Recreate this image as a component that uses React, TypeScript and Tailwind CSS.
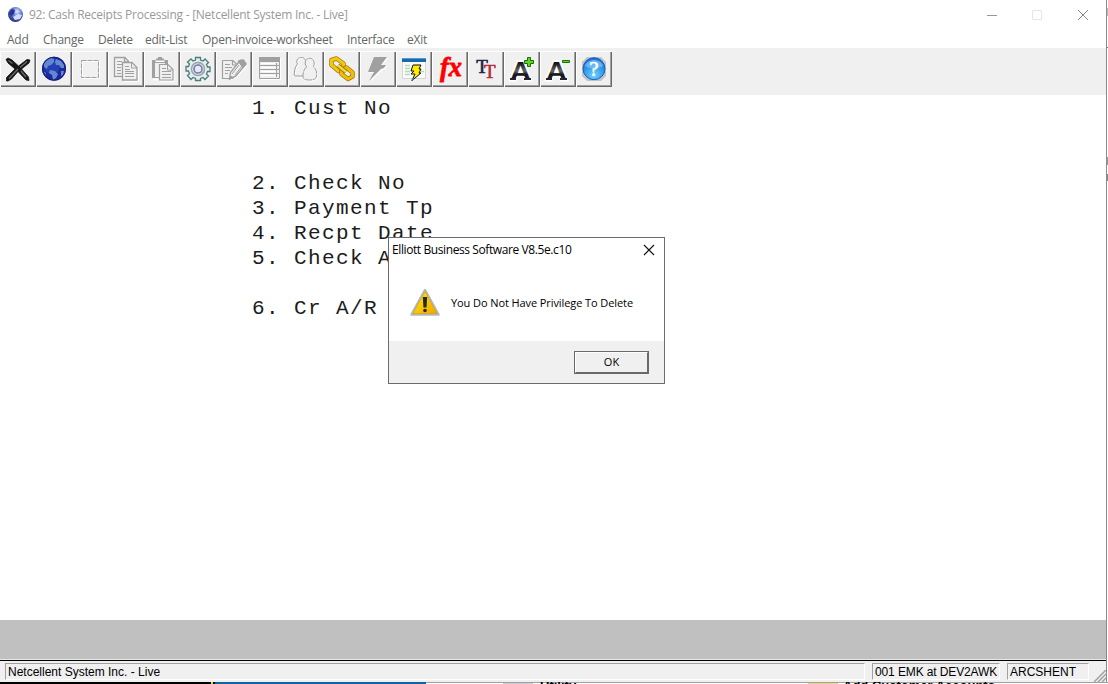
import type { ReactNode } from "react";
import { clsx } from "clsx";

const MENU_ITEMS = [
  { label: "Add", className: "w-9" },
  { label: "Change", className: "w-[55px]" },
  { label: "Delete", className: "w-[47px]" },
  { label: "edit-List", className: "w-[57px]" },
  { label: "Open-invoice-worksheet", className: "w-[145px]" },
  { label: "Interface", className: "w-[60px]" },
  { label: "eXit", className: "w-8" },
];

// blank entries keep the terminal's 25px line grid
const SCREEN_LINES = [
  "1. Cust No",
  "",
  "",
  "2. Check No",
  "3. Payment Tp",
  "4. Recpt Date",
  "5. Check A",
  "",
  "6. Cr A/R",
];

function Icon({ children }: { children: ReactNode }) {
  return (
    <svg width="36" height="36" viewBox="0 0 36 36" fill="none" className="block">
      {children}
    </svg>
  );
}

function CrossIcon() {
  return (
    <Icon>
      <path
        d="M6 8.500L8 7l4 2 6.500 6L27 8.500l3 .5-1 3-7.500 6 7 8 .5 3.500-3-.5-8-8.500-6.500 7.500-3.500 2H6.500v-3.500l8.500-8.500-7-6z"
        fill="#151515"
        stroke="#151515"
        strokeWidth=".8"
      />
      <path d="M8.500 9.500l4 3M9 27.500l9-9.500M20 16.500l7-6M21 20l5 6" stroke="#6a6a6a" strokeWidth="1.300" />
    </Icon>
  );
}

function GlobeIcon() {
  return (
    <Icon>
      <circle cx="18" cy="17.700" r="12" fill="#1c2a9c" />
      <circle cx="16" cy="15" r="8" fill="#2440b4" />
      <path
        d="M8 12l3-3 4-2 3 1v3l-3 3-3 1-1 3-3-2zM20 8l5 2 3 4 0 3-3 0-2-3-3 0-1-3zM14 19l5 1 3 3-2 4-3 2-1-5-3-2zM25 20l3 0-1 4-2 1zM7 20l3 2 0 2z"
        fill="#6488cf"
      />
      <circle cx="18" cy="17.700" r="11.500" stroke="#141c7c" />
    </Icon>
  );
}

function SelectIcon() {
  return (
    <Icon>
      <path d="M10.500 10.500H27.500V27.500H10.500Z" stroke="#fff" />
      <path d="M9.500 9.500H26.500V26.500H9.500Z" stroke="#a0a0a0" strokeDasharray="5 1" />
    </Icon>
  );
}

function CopyIcon() {
  return (
    <Icon>
      <path d="M7.500 26.500h8M16 7h3l4 4" stroke="#fff" strokeWidth="1.500" />
      <path d="M14 25.500H6.500V6.500H17l3.500 3.500v2M16.500 7v4h4" stroke="#a0a0a0" strokeWidth="1.300" />
      <path d="M9 10.500h5M9 13.500h5M9 16.500h4M9 19.500h4M9 22.500h4" stroke="#a0a0a0" />
      <path d="M15.500 11.500H25l4.500 5v13h-14z" stroke="#fff" transform="translate(1 1)" />
      <path d="M14.500 11.500H24l5 5v12.500H14.500z" fill="#f0f0f0" stroke="#a0a0a0" strokeWidth="1.300" />
      <path d="M23.500 12v5H29M17 15.500h4M17 18.500h5M17 20.500h9M17 22.500h9M17 25.500h9" stroke="#a0a0a0" />
    </Icon>
  );
}

function PasteIcon() {
  return (
    <Icon>
      <path d="M9 28.500h7M24.500 12v-1" stroke="#fff" strokeWidth="1.500" />
      <path d="M8 9h16v4h-3v-1H11v14h4v1H8z" fill="#a0a0a0" />
      <path d="M12 9V7.500h2V6h4v1.500h2V9z" fill="#a0a0a0" />
      <path d="M11.500 9.500h9v1.500h-9z" fill="#fff" />
      <path d="M15.500 14.500H24l5 4v11.500H15.500z" stroke="#fff" transform="translate(1 .7)" />
      <path d="M15.500 13.500H24l5 5v10.500H15.500z" fill="#f0f0f0" stroke="#a0a0a0" strokeWidth="1.200" />
      <path d="M23.500 14v5H29M18 17.500h4M18 20.500h9M18 23.500h9M18 26.500h9" stroke="#a0a0a0" />
    </Icon>
  );
}

function GearIcon() {
  return (
    <Icon>
      <path
        d="M15.500 9V6.500h5V9l2.500 1 2-2 3.500 3.500-2 2 1 2.500h2.500v4.500h-2.500l-1 2.500 2 2-3.500 3.500-2-2-2.500 1v2h-5v-2l-2.500-1-2 2L7.500 24.500l2-2-1-2.500H6v-4.500h2.500l1-2.500-2-2L11 8l2 2z"
        fill="#e3efe8"
        stroke="#4d7c7d"
        strokeWidth="1.300"
      />
      <path d="M18 10.500l4 1-4 3zM20 22l5-4v4z" fill="#b8dcc3" />
      <circle cx="18" cy="18" r="6.500" stroke="#9aa0bd" strokeWidth="1.500" />
      <circle cx="18" cy="18" r="4" fill="#e9e8f4" stroke="#777ba4" strokeWidth="1.600" />
    </Icon>
  );
}

function EditIcon() {
  return (
    <Icon>
      <path d="M6.500 9.500H17l4 4M6.500 9.500v18H17M16.500 10v4h4" stroke="#a0a0a0" strokeWidth="1.200" />
      <path d="M9 13.500h5M9 16.500h7M9 19.500h5M9 22.500h3" stroke="#a0a0a0" />
      <path d="M14 29.500l1-6L25 11l3 0 3 4-10 12z" fill="#fff" />
      <path d="M13.500 28l1-6.500L24 9.500h3l3 3.500-10 12z" fill="#f0f0f0" stroke="#a0a0a0" strokeWidth="1.400" />
      <path d="M22 10l3-1h3l2 4-3 4zM13.500 28l1-3 3 2zM16 23l7-9M19 24l7-9" fill="#a0a0a0" stroke="#a0a0a0" />
    </Icon>
  );
}

function ListIcon() {
  return (
    <Icon>
      <path d="M8.500 28.500H28.500V7" stroke="#fff" />
      <path d="M7.500 6.500h20v21h-20z" stroke="#a0a0a0" />
      <path d="M7 6h21v5H7z" fill="#a0a0a0" />
      <path d="M8 14.500h19M8 18.500h19M8 22.500h19M24.500 12v14" stroke="#a0a0a0" />
      <path d="M9 12.500h14M9 16.500h14M9 20.500h14M9 24.500h14" stroke="#fff" />
    </Icon>
  );
}

function PeopleIcon() {
  const back = "M9.500 13c-2-3 0-6 3-6.500 3.500-.5 6 2 5 6.500l2 3 1 9H8c-2 0-2-1-1.500-4 .3-3 .5-5 3-8z";
  const front = "M18.500 16c-2-3-2-7.500 2-8.500 4-1 7 2 5 8.500 3 2 3.500 6 3 9 0 3-3 4-7.500 4s-6-1.500-6-4c0-4 1-7 3.500-9z";
  return (
    <Icon>
      <path d={back} stroke="#fff" transform="translate(1 1)" />
      <path d={back} stroke="#a0a0a0" />
      <path d={front} stroke="#fff" transform="translate(1 1)" />
      <path d={front} fill="#f0f0f0" stroke="#a0a0a0" strokeDasharray="7 .8" />
    </Icon>
  );
}

function ChainIcon() {
  return (
    <Icon>
      <g strokeLinejoin="round">
        <path d="M7.500 9l5-1.500 7 5v5l-5 2.500-7-6z" stroke="#9c7a04" strokeWidth="4.500" />
        <path d="M7.500 9l5-1.500 7 5v5l-5 2.500-7-6z" stroke="#f3c710" strokeWidth="3" />
        <path d="M17.500 19l5-2.500 6 5v4l-4.500 2.500-6.500-5z" stroke="#9c7a04" strokeWidth="4.500" />
        <path d="M17.500 19l5-2.500 6 5v4l-4.500 2.500-6.500-5z" stroke="#efbd08" strokeWidth="3" />
        <path d="M14 14.500l8 6.500" stroke="#9c7a04" strokeWidth="4.500" />
        <path d="M14 14.500l8 6.500" stroke="#f8d838" strokeWidth="2.500" />
      </g>
    </Icon>
  );
}

function BoltIcon() {
  const bolt = "M14 6h13l-6 8h5l-2 3-3 1-12 12 5-9H8z";
  return (
    <Icon>
      <path d={bolt} fill="#fff" transform="translate(1 1)" />
      <path d={bolt} fill="#a0a0a0" />
    </Icon>
  );
}

function WindowBoltIcon() {
  return (
    <Icon>
      <path d="M6.500 7.500h23v20h-23z" fill="#fafafa" stroke="#d5d5d5" />
      <path d="M6 7h24v4H6z" fill="#1769ad" />
      <path d="M6 7.500h24" stroke="#4e9bd0" />
      <path d="M9 14.500h5M9 17.500h5M9 20.500h5M9 23.500h5M25 20.500h3" stroke="#b4d9b5" strokeWidth="1.500" />
      <path d="M17 14h8l-2 4h2l-2 4h2l-9 7.500 3-6.500h-4l3-3h-3z" fill="#ffed00" stroke="#111" />
      <path d="M15 29.500l3-2" stroke="#00aeb9" />
    </Icon>
  );
}

function FunctionIcon() {
  return (
    <Icon>
      <text
        x="8"
        y="25"
        fontFamily="Liberation Serif, serif"
        fontSize="27"
        fontWeight="700"
        fontStyle="italic"
        fill="#f00"
        stroke="#f00"
        strokeWidth=".8"
        textLength="22"
        lengthAdjust="spacingAndGlyphs"
      >
        fx
      </text>
    </Icon>
  );
}

function FontIcon() {
  return (
    <Icon>
      <text x="8.300" y="21.500" fontFamily="Liberation Serif, serif" fontSize="19" fill="#202040" stroke="#202040" strokeWidth=".6">
        T
      </text>
      <text x="16" y="27" fontFamily="Liberation Serif, serif" fontSize="19" fill="#b52b35" stroke="#b52b35" strokeWidth=".6">
        T
      </text>
    </Icon>
  );
}

function LetterA() {
  return (
    <>
      <defs>
        <linearGradient id="letter-a" x1="0" y1="0" x2="0" y2="1">
          <stop offset=".2" stopColor="#111" />
          <stop offset=".5" stopColor="#666" />
          <stop offset=".62" stopColor="#181820" />
          <stop offset="1" stopColor="#222230" />
        </linearGradient>
      </defs>
      <text
        x="6"
        y="29"
        fontFamily="Liberation Sans, sans-serif"
        fontSize="25"
        fontWeight="700"
        stroke="#fff"
        strokeWidth="3"
        fill="url(#letter-a)"
        paintOrder="stroke"
        textLength="21"
        lengthAdjust="spacingAndGlyphs"
      >
        A
      </text>
      <path d="M6 28h6M20 28h7" stroke="#222230" strokeWidth="2" />
    </>
  );
}

function EnlargeIcon() {
  return (
    <Icon>
      <LetterA />
      <path d="M23.500 6.500h3v3h3v3h-3v3h-3v-3h-3v-3h3z" fill="#62d321" stroke="#17700b" />
    </Icon>
  );
}

function ReduceIcon() {
  return (
    <Icon>
      <LetterA />
      <path d="M22.500 9.500h7v2h-7z" fill="#62d321" stroke="#17700b" />
    </Icon>
  );
}

function HelpIcon() {
  return (
    <Icon>
      <defs>
        <radialGradient id="help-ball" cx=".5" cy=".8" r=".7">
          <stop offset="0" stopColor="#6bd5ff" />
          <stop offset="1" stopColor="#1676dc" />
        </radialGradient>
      </defs>
      <path d="M11 6h14l5 5v14l-5 5H11l-5-5V11z" fill="#c3c3c3" />
      <circle cx="18" cy="17.700" r="11" fill="url(#help-ball)" stroke="#1763bb" />
      <path d="M9 15c2-8 16-8 18 0-5 3-12 3-18 0z" fill="#8cc9f5" opacity=".65" />
      <text x="18" y="24.500" textAnchor="middle" fontFamily="Liberation Serif, serif" fontSize="21" fill="#fff" stroke="#fff" strokeWidth=".5">
        ?
      </text>
    </Icon>
  );
}

const TOOLS = [
  { name: "Exit", icon: CrossIcon },
  { name: "Web", icon: GlobeIcon },
  { name: "Select", icon: SelectIcon },
  { name: "Copy", icon: CopyIcon },
  { name: "Paste", icon: PasteIcon },
  { name: "Settings", icon: GearIcon },
  { name: "Edit", icon: EditIcon },
  { name: "List", icon: ListIcon },
  { name: "Users", icon: PeopleIcon },
  { name: "Link", icon: ChainIcon },
  { name: "Run", icon: BoltIcon },
  { name: "Macro", icon: WindowBoltIcon },
  { name: "Function", icon: FunctionIcon },
  { name: "Font", icon: FontIcon },
  { name: "Larger", icon: EnlargeIcon },
  { name: "Smaller", icon: ReduceIcon },
  { name: "Help", icon: HelpIcon },
];

function TitleBar() {
  return (
    <div className="flex h-[30px] items-center pl-[7px]">
      <svg width="17" height="17" viewBox="0 0 17 17">
        <defs>
          <radialGradient id="app-ball" cx=".6" cy=".3" r=".8">
            <stop offset="0" stopColor="#e6edff" />
            <stop offset=".35" stopColor="#7188d4" />
            <stop offset="1" stopColor="#101b79" />
          </radialGradient>
        </defs>
        <circle cx="8.500" cy="7.500" r="7.500" fill="url(#app-ball)" />
        <path d="M2 6l3-4 3 1-1 4-3 2z" fill="#26359a" />
        <path d="M6 10l5-3 4 1-2 4-5 1z" fill="#d5def7" />
      </svg>
      <span className="ml-[5px] text-[12px] tracking-[-0.247px] text-[#999]">
        92: Cash Receipts Processing - [Netcellent System Inc. - Live]
      </span>
      <svg width="104" height="12" viewBox="0 0 104 12" fill="none" className="mr-[16px] mb-px ml-auto">
        <path d="M1 6.500h10" stroke="#999" />
        <path d="M46.500 1.500h9v9h-9z" stroke="#e6e6e6" />
        <path d="M92 1l10 10M102 1L92 11" stroke="#8a8a8a" />
      </svg>
    </div>
  );
}

function MessageBox() {
  return (
    <div className="absolute top-[237px] left-[388px] flex h-[147px] w-[277px] flex-col border border-[#6b6b6b] bg-white">
      <div className="flex h-6 items-center justify-between pr-[9px] pl-[3px]">
        <span className="text-[12px] tracking-[-0.400px] text-black">Elliott Business Software V8.5e.c10</span>
        <svg width="12" height="12" viewBox="0 0 12 12">
          <path d="M1 1l10 10M11 1L1 11" stroke="#111" strokeWidth="1.100" />
        </svg>
      </div>
      <div className="flex flex-1 items-center pt-[3px] pl-[20px]">
        <svg width="32" height="32" viewBox="0 0 32 32">
          <defs>
            <linearGradient id="warning" x1="0" y1="0" x2="1" y2="1">
              <stop offset="0" stopColor="#fff000" />
              <stop offset="1" stopColor="#f2a500" />
            </linearGradient>
          </defs>
          <path d="M16 3L2.500 27.500h27z" fill="#bfc2c8" stroke="#b5b7bb" strokeWidth="2.500" strokeLinejoin="round" />
          <path d="M16 4.500L4 26.500h24z" fill="url(#warning)" stroke="#d49b00" strokeWidth=".6" />
          <path d="M13.800 10h4.400l-.7 10.500h-3z" fill="#25282b" />
          <circle cx="16" cy="23.500" r="1.800" fill="#25282b" />
        </svg>
        <span className="ml-[10px] text-[11px] tracking-[-0.090px] text-black">You Do Not Have Privilege To Delete</span>
      </div>
      <div className="flex h-[42px] justify-end bg-[#f0f0f0] pt-[10px] pr-[15px]">
        <button type="button" className="h-[23px] w-[75px] border border-[#696969]">
          <span className="flex h-full items-center justify-center border border-t-white border-r-[#696969] border-b-[#696969] border-l-white text-[11px] text-black">
            OK
          </span>
        </button>
      </div>
    </div>
  );
}

function StatusPane({ className, children }: { className: string; children: string }) {
  return (
    <div
      className={clsx(
        "flex h-[17px] items-center border border-t-[#a0a0a0] border-r-white border-b-white border-l-[#a0a0a0] pl-[2px] font-['Liberation_Sans',Arial,sans-serif] text-[12px] whitespace-nowrap text-black",
        className,
      )}
    >
      {children}
    </div>
  );
}

function StatusBar() {
  return (
    <div className="flex h-[21px] bg-[#f0f0f0] pt-[2px] pl-[5px]">
      <StatusPane className="w-[860px]">Netcellent System Inc. - Live</StatusPane>
      <StatusPane className="ml-[7px] w-[128px] tracking-[-0.120px]">001 EMK at DEV2AWK</StatusPane>
      <StatusPane className="ml-[7px] w-[82px]">ARCSHENT</StatusPane>
      <svg width="12" height="12" viewBox="0 0 12 12" className="mt-[7px] ml-auto">
        <path d="M0 12L12 0M4 12l8-8M8 12l4-4" stroke="#a0a0a0" strokeWidth="1.500" />
      </svg>
    </div>
  );
}

// the two pixel rows of other windows that show under this one
function BackgroundSliver() {
  return (
    <div className="flex h-[2px] overflow-hidden bg-white font-['Liberation_Sans',Arial,sans-serif] text-[13px] leading-[6px] font-bold whitespace-nowrap text-black">
      <div className="w-[211px] bg-black" />
      <div className="w-[2px] bg-[#e6e600]" />
      <div className="w-[2px] bg-black" />
      <div className="w-[211px] bg-[#1562a3]" />
      <div className="flex h-[2px] flex-1 border-t border-[#a0a0a0]">
        <div className="ml-[77px] w-[30px] bg-[#c9ccd3]" />
        <span className="ml-[7px] w-10">Utility</span>
        <div className="ml-[228px] w-[30px] bg-[#efd47c]" />
        <span className="ml-[5px]">Add Customer Accounts</span>
      </div>
    </div>
  );
}

export default function App() {
  return (
    <div className="relative h-[684px] w-[1108px] overflow-hidden bg-white font-['Open_Sans','Noto_Sans',sans-serif]">
      <div className="flex">
        <div className="h-[682px] w-[1106px]">
          <TitleBar />
          <nav className="flex h-[18px] items-center pl-[7px] text-[12px] tracking-[-0.260px] text-[#666]">
            {MENU_ITEMS.map((item) => (
              <span key={item.label} className={clsx("mt-px whitespace-nowrap", item.className)}>
                {item.label}
              </span>
            ))}
          </nav>
          <div className="flex h-[47px] bg-[#f0f0f0] pt-[3px]">
            {TOOLS.map(({ name, icon: ToolIcon }) => (
              <button
                key={name}
                type="button"
                aria-label={name}
                className="size-9 shadow-[inset_1px_1px_#fff,inset_-1px_-1px_#696969,inset_-2px_-2px_#a0a0a0]"
              >
                <ToolIcon />
              </button>
            ))}
          </div>
          <main className="h-[525px] pt-px pl-[252px] font-['Liberation_Mono','Courier_New',monospace] text-[21px] leading-[25px] tracking-[1.398px] text-[#1c1c1c]">
            {SCREEN_LINES.map((line, i) => (
              <div key={i} className="h-[25px] whitespace-pre">
                {line}
              </div>
            ))}
          </main>
          <div className="h-[39px] bg-[#c0c0c0]" />
          <div className="h-[2px] border-t border-b border-t-[#e8e8e8] border-b-black" />
          <StatusBar />
        </div>
        <div className="h-[682px] w-px bg-[#8a8a8a]" />
        <div className="flex w-px flex-col">
          <div className="mt-2 h-2 bg-[#bbb]" />
          <div className="mt-[31px] h-px bg-[#777]" />
          <div className="mt-[109px] h-2 bg-[#999]" />
          <div className="mt-[9px] h-[7px] bg-[#888]" />
        </div>
      </div>
      <BackgroundSliver />
      <MessageBox />
    </div>
  );
}
